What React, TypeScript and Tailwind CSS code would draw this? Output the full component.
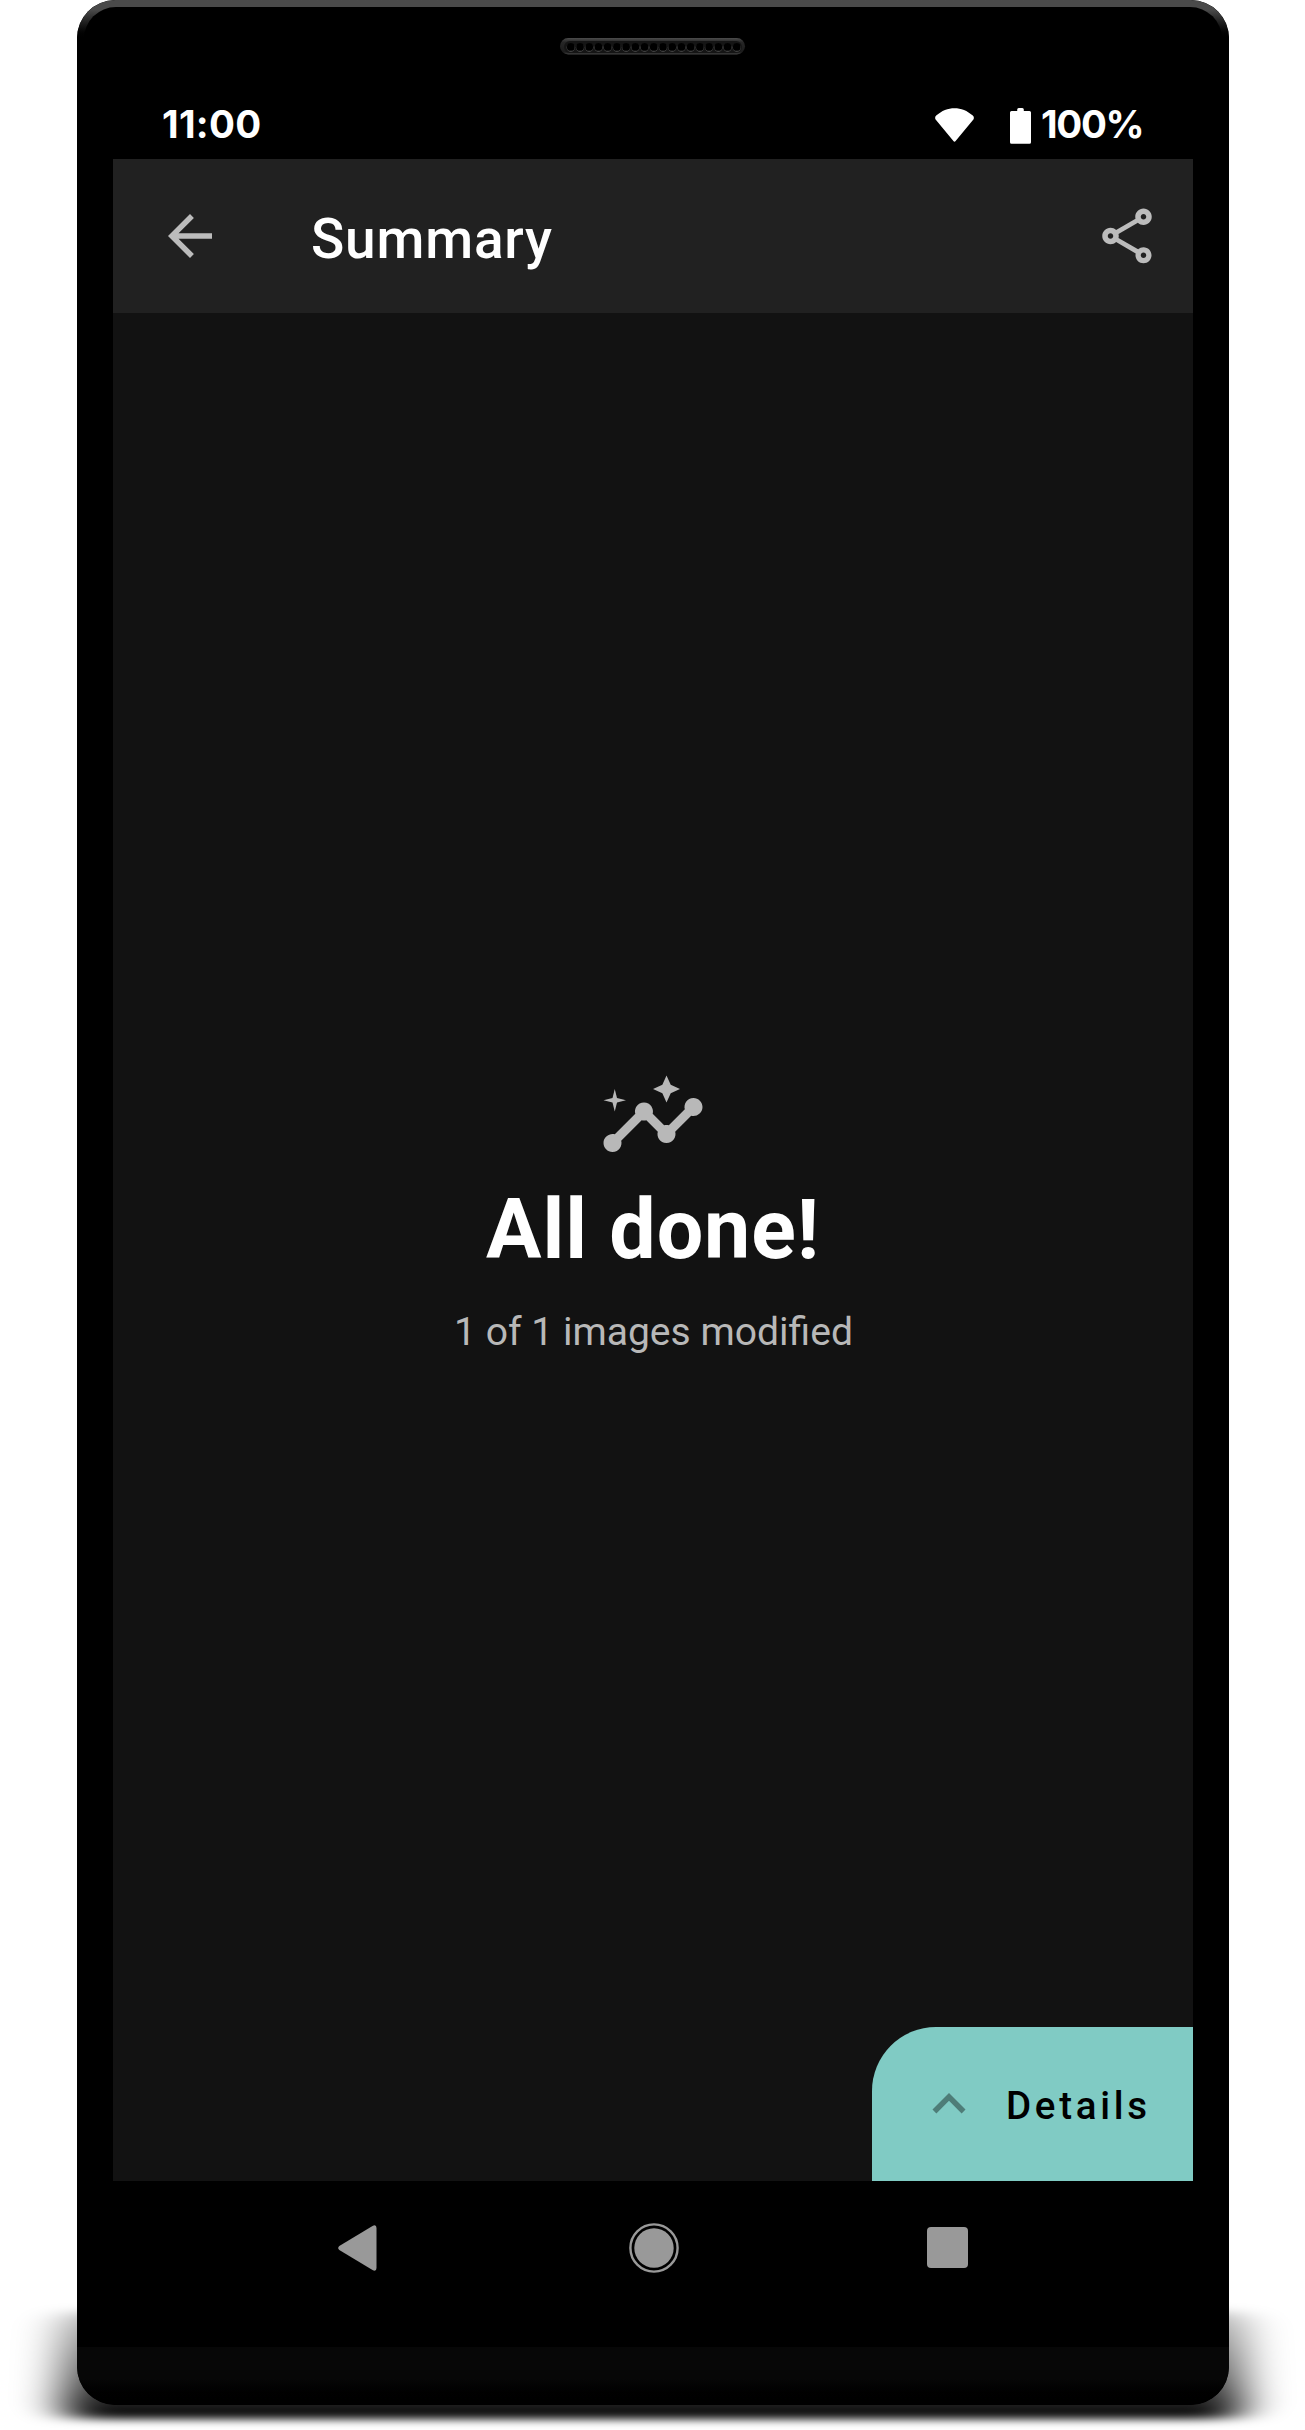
import { MdArrowBack, MdExpandLess, MdInsights, MdOutlineShare } from "react-icons/md";

function Speaker() {
  return (
    <svg className="absolute left-[483px] top-[38px] h-[17px] w-[186px]" viewBox="0 0 186 17">
      <defs>
        <linearGradient id="slot" x1="0" y1="0" x2="0" y2="1">
          <stop offset="0" stopColor="#4c4c4c" />
          <stop offset="0.25" stopColor="#262626" />
          <stop offset="0.85" stopColor="#1c1c1c" />
          <stop offset="1" stopColor="#444" />
        </linearGradient>
      </defs>
      <rect x="0" y="0" width="185" height="16.5" rx="8.2" fill="url(#slot)" />
      <rect x="4" y="3" width="178" height="12" rx="6" fill="#151515" />
      {Array.from({ length: 19 }, (_, i) => (
        <g key={i}>
          <circle cx={10.8 + i * 9.22} cy="9.6" r="4.2" fill="#505050" />
          <circle cx={10.8 + i * 9.22} cy="8.9" r="3.9" fill="#000" />
        </g>
      ))}
    </svg>
  );
}

function StatusBar() {
  return (
    <div className="flex h-[66px] items-center justify-between pb-[3px] pl-[49px] pr-[49px] font-['Inter'] text-[38.5px] font-bold leading-none text-white">
      <span className="tracking-[0.3px]">11:00</span>
      <div className="flex items-center">
        <svg className="mt-px h-[34px] w-[39px]" viewBox="0 0 39 34" fill="#fff">
          <path d="M19.5 33.7Q18.9 33.7 18.4 33L.4 11.2Q-.4 8.8 1.2 7.6C12-2.2 27-2.2 37.8 7.6Q39.4 8.8 38.6 11.2L20.6 33Q20.1 33.7 19.5 33.7z" />
        </svg>
        <svg className="ml-[36px] mt-[3px] h-[36px] w-[21px]" viewBox="0 0 21 36" fill="#fff">
          <path d="M7.2 3V1.5Q7.2 0 8.7 0h3.6q1.5 0 1.5 1.5V3H19.5Q21 3 21 4.5V34.3Q21 35.8 19.5 35.8H1.5Q0 35.8 0 34.3V4.5Q0 3 1.5 3z" />
        </svg>
        <span className="ml-[10px] w-[103px] whitespace-nowrap tracking-[-1.3px]">100%</span>
      </div>
    </div>
  );
}

function Shadow() {
  return (
    <svg className="absolute inset-x-0 top-[2290px] h-[140px] w-[1305px]" viewBox="0 0 1305 140">
      <defs>
        <filter id="soft" filterUnits="userSpaceOnUse" x="-80" y="-40" width="1465" height="220">
          <feGaussianBlur stdDeviation="23 4.5" />
        </filter>
        <linearGradient id="rise" x1="0" y1="0" x2="0" y2="1">
          <stop offset="0" stopColor="#000" stopOpacity="0.25" />
          <stop offset="0.6" stopColor="#000" stopOpacity="0.65" />
          <stop offset="1" stopColor="#000" />
        </linearGradient>
      </defs>
      <rect x="62" y="21" width="1181" height="108" rx="20" fill="url(#rise)" filter="url(#soft)" />
    </svg>
  );
}

function NavigationBar() {
  return (
    <div className="flex h-[132px] items-center pl-[225px] pt-px">
      <svg className="h-[46px] w-[39px]" viewBox="0 0 39 46" fill="#999">
        <path d="M1.3 21 34.5.9Q38.5-.8 38.5 3v40q0 3.8-4 2.1L1.3 25Q-.9 23 1.3 21z" />
      </svg>
      <svg className="ml-[252px] h-[50px] w-[50px]" viewBox="0 0 50 50">
        <circle cx="25" cy="25" r="23.6" fill="none" stroke="#999" strokeWidth="2.4" />
        <circle cx="25" cy="25" r="19.7" fill="#999" />
      </svg>
      <div className="ml-[248px] size-[41px] rounded-[4px] bg-[#999]" />
    </div>
  );
}

export default function App() {
  return (
    <div className="relative h-[2430px] w-[1305px] overflow-hidden bg-white font-['Roboto']">
      <Shadow />
      <div className="relative ml-[77px] h-[2405px] w-[1152px] overflow-hidden rounded-[38px] bg-black px-[36px] pt-[93px]">
        <div className="absolute inset-x-0 top-0 h-[44px] rounded-t-[38px] bg-linear-to-b from-[#4a4a4a] from-[10px] to-black to-[40px]" />
        <div className="absolute inset-x-[7px] top-[7px] h-[60px] rounded-t-[32px] bg-black" />
        <Speaker />
        <div className="relative">
          <StatusBar />
          <header className="flex h-[154px] items-center bg-[#212121] pl-[44px] pr-[33px] text-[#bcbcbc]">
            <MdArrowBack className="size-[66px]" />
            <h1 className="ml-[88px] mt-[7px] text-[55px] font-medium leading-none tracking-[0.8px] text-white">Summary</h1>
            <MdOutlineShare className="ml-auto size-[66px]" />
          </header>
          <main className="flex h-[1868px] flex-col bg-[#121212]">
            <section className="flex flex-col items-center pt-[749px]">
              <MdInsights className="size-[108px] text-[#b8b8b8]" />
              <h2 className="mt-[18px] text-[82.5px] font-bold leading-[84px] tracking-[0.9px] text-white">All done!</h2>
              <p className="ml-px mt-[37px] text-[39.1px] leading-[46px] text-[#b8b8b8]">1 of 1 images modified</p>
            </section>
            <button className="mt-auto flex h-[154px] w-[321px] items-center self-end rounded-tl-[64px] bg-[#80cbc4] pl-[44px]">
              <MdExpandLess className="size-[66px] text-[#4e7d78]" />
              <span className="ml-[24px] mt-[4px] text-[38.5px] font-medium leading-none tracking-[3.7px] text-black">Details</span>
            </button>
          </main>
          <NavigationBar />
        </div>
        <div className="absolute inset-x-0 bottom-0 h-[58px] rounded-b-[38px] bg-linear-to-b from-[#070707] from-55% to-black" />
      </div>
    </div>
  );
}
